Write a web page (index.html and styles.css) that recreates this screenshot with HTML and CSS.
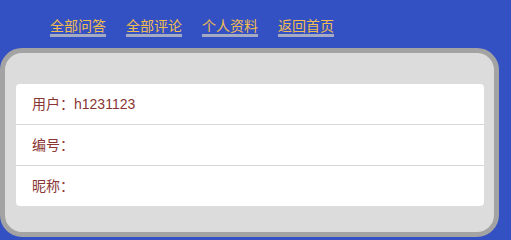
FILE: index.html
```html
<!DOCTYPE html>
<html lang="zh">
<head>
<meta charset="utf-8">
<title>个人资料</title>
<link rel="stylesheet" href="styles.css">
</head>
<body>
<nav class="nav">
  <a class="nav-link" href="#">全部问答</a>
  <a class="nav-link" href="#">全部评论</a>
  <a class="nav-link" href="#">个人资料</a>
  <a class="nav-link" href="#">返回首页</a>
</nav>
<section class="panel">
  <ul class="info-list">
    <li class="info-row">用户：h1231123</li>
    <li class="info-row">编号：</li>
    <li class="info-row">昵称：</li>
  </ul>
</section>
</body>
</html>
```
FILE: styles.css
```css
html, body {
  margin: 0;
  padding: 0;
}
body {
  background: #3351c3;
  font-family: "Noto Sans CJK SC", "Liberation Sans", sans-serif;
  font-size: 14px;
  height: 238px;
  overflow: hidden;
}
.nav {
  display: flex;
  gap: 20px;
  padding: 16px 0 0 50px;
  height: 21px;
}
.nav-link {
  display: block;
  color: #f2bc50;
  text-decoration: none;
  font-size: 14px;
  line-height: 18px;
  height: 18px;
  border-bottom: 3px solid #a4aac4;
}
.panel {
  box-sizing: border-box;
  width: 499px;
  height: 189px;
  margin-top: 11px;
  border: 5px solid #a3a3a3;
  border-radius: 22px;
  background: #dcdcdc;
  padding: 31px 10px 0 11px;
}
.info-list {
  list-style: none;
  margin: 0;
  padding: 0;
  background: #ffffff;
  border-radius: 4px;
}
.info-row {
  height: 40px;
  line-height: 40px;
  padding-left: 16px;
  color: #8a3434;
  font-family: "Liberation Sans", "Noto Sans CJK SC", sans-serif;
}
.info-row + .info-row {
  border-top: 1px solid #d8d8d8;
}
```
